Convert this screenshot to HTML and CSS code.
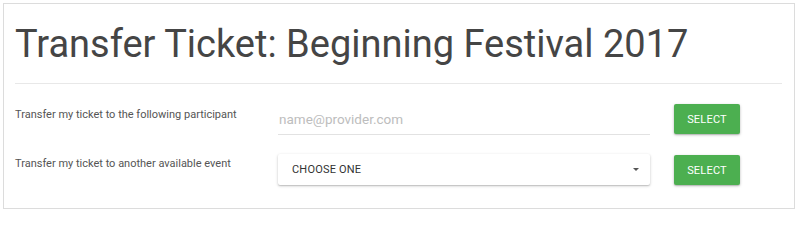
FILE: index.html
```html
<!DOCTYPE html>
<html>
<head>
<meta charset="utf-8">
<link rel="stylesheet" href="styles.css">
</head>
<body>
<div class="card">
  <h1 class="title">Transfer Ticket: Beginning Festival 2017</h1>
  <hr class="divider">
  <div class="row row-first">
    <div class="label">Transfer my ticket to the following participant</div>
    <div class="field">
      <input class="text-input" type="text" placeholder="name@provider.com">
    </div>
    <button class="btn">SELECT</button>
  </div>
  <div class="row row-second">
    <div class="label">Transfer my ticket to another available event</div>
    <div class="field">
      <div class="select">
        <span class="select-text">CHOOSE ONE</span>
        <span class="caret"></span>
      </div>
    </div>
    <button class="btn">SELECT</button>
  </div>
</div>
</body>
</html>
```
FILE: styles.css
```css
html, body {
  margin: 0;
  padding: 0;
  background: #fff;
  font-family: Roboto, "Liberation Sans", sans-serif;
}
.card {
  margin: 3px 5px 0 3px;
  height: 206px;
  box-sizing: border-box;
  border: 1px solid #dcdcdc;
  padding: 0 12px 0 11px;
}
.title {
  margin: 18px 0 0 0;
  font-size: 38px;
  line-height: 45px;
  font-weight: 400;
  color: #454545;
  white-space: nowrap;
}
.divider {
  margin: 16px 0 0 0;
  border: 0;
  border-top: 1px solid #e8e8e8;
  height: 0;
}
.row {
  display: grid;
  grid-template-columns: 263px 372px 66px;
}
.row-first {
  margin-top: 20px;
  height: 31px;
}
.row-second {
  margin-top: 20px;
}
.label {
  font-size: 11px;
  color: #555;
  line-height: 14px;
}
.row-first .label { padding-top: 4px; }
.row-second .label { padding-top: 2px; }
.text-input {
  display: block;
  width: 100%;
  box-sizing: border-box;
  border: 0;
  border-bottom: 1px solid #e2e2e2;
  outline: none;
  padding: 6px 0 6px 1px;
  height: 31px;
  font-family: Roboto, "Liberation Sans", sans-serif;
  font-size: 13.5px;
  color: #333;
  background: transparent;
}
.text-input::placeholder {
  color: #bdbdbd;
}
.select {
  display: flex;
  align-items: center;
  justify-content: space-between;
  height: 31px;
  box-sizing: border-box;
  padding: 0 11px 0 14px;
  border-radius: 2px;
  background: #fff;
  box-shadow: 0 1px 3px rgba(0,0,0,0.22), 0 1px 1px rgba(0,0,0,0.10);
  margin-top: -1px;
}
.select-text {
  font-size: 11px;
  color: #333;
  letter-spacing: 0.2px;
}
.caret {
  width: 0;
  height: 0;
  border-left: 3px solid transparent;
  border-right: 3px solid transparent;
  border-top: 3px solid #555;
}
.btn {
  margin-left: 24px;
  width: 66px;
  height: 30px;
  border: 0;
  border-radius: 2px;
  background: #4caf50;
  color: #fff;
  font-family: Roboto, "Liberation Sans", sans-serif;
  font-size: 11px;
  letter-spacing: 0.2px;
  box-shadow: 0 1px 3px rgba(0,0,0,0.25), 0 1px 1px rgba(0,0,0,0.12);
  padding: 0;
}
```
